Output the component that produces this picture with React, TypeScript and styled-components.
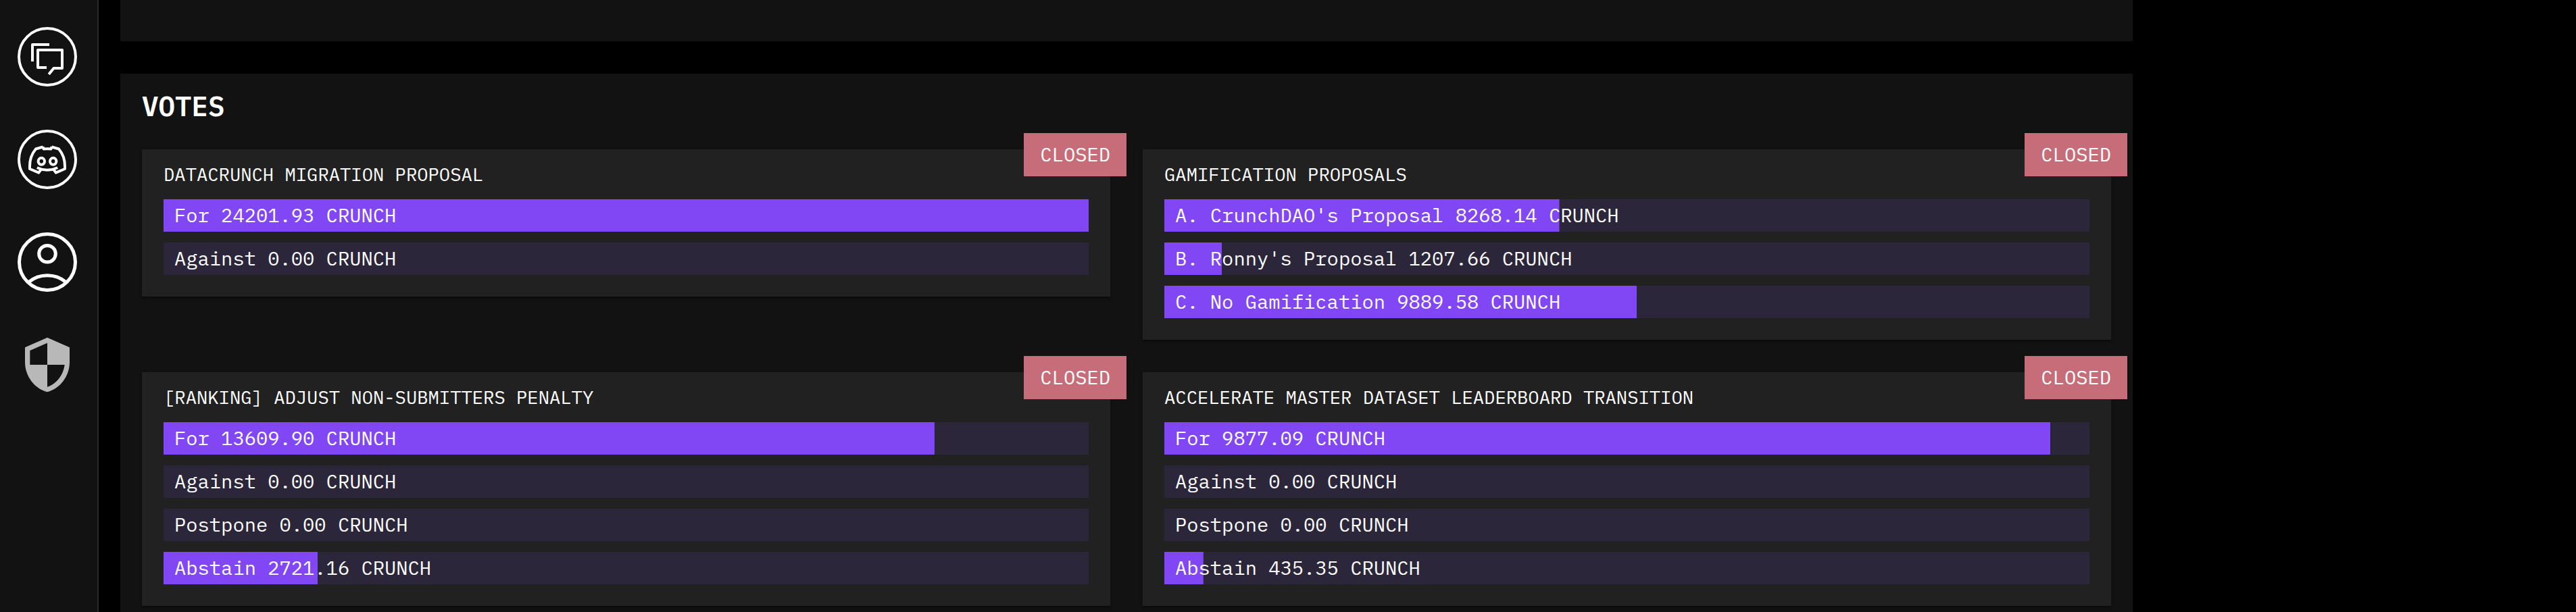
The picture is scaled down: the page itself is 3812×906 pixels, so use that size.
import React from 'react';
import styled, { createGlobalStyle } from 'styled-components';

const GlobalStyle = createGlobalStyle`
  *, *::before, *::after { box-sizing: border-box; }
  body {
    margin: 0;
    background: #000;
    color: #fff;
    font-family: 'IBM Plex Mono', 'Liberation Mono', monospace;
    overflow: hidden;
  }
`;

const Page = styled.div`
  display: flex;
  height: 906px;
  overflow: hidden;
  background: #000;
`;

const Sidebar = styled.nav`
  flex: none;
  display: flex;
  flex-direction: column;
  align-items: flex-start;
  gap: 64px;
  width: 146px;
  padding: 40px 0 0 26px;
  background: #121212;
  border-right: 2px solid #2a2a2a;
`;

const NavIcon = styled.svg<{ $stroke?: number }>`
  display: block;
  flex: none;
  width: 88px;
  height: 88px;
  fill: none;
  stroke: #fff;
  stroke-width: ${({ $stroke = 4 }) => $stroke};
  stroke-linejoin: round;
`;

const ShieldIcon = styled(NavIcon)`
  fill: #b8b8b8;
  stroke: none;
`;

const Main = styled.main`
  display: flex;
  flex-direction: column;
  gap: 48px;
  width: 3010px;
  padding-left: 32px;
`;

const TopPanel = styled.section`
  flex: none;
  height: 61px;
  background: #121212;
`;

const VotesPanel = styled.section`
  flex: none;
  padding: 32px;
  background: #121212;
`;

const PanelTitle = styled.h2`
  margin: 0 0 47.7px;
  font-size: 40.8px;
  font-weight: 600;
  line-height: 32px;
`;

const CardGrid = styled.div`
  display: grid;
  grid-template-columns: 1fr 1fr;
  align-items: start;
  gap: 48px;
`;

const Card = styled.article`
  position: relative;
  padding: 16px 32px 32px;
  background: #212121;
  box-shadow:
    0 4px 2px -2px rgba(0, 0, 0, 0.2),
    0 2px 2px rgba(0, 0, 0, 0.14),
    0 2px 6px rgba(0, 0, 0, 0.12);
`;

const CardTitle = styled.h3`
  margin: 0 0 16.2px;
  font-size: 27.2px;
  font-weight: 400;
  line-height: 42.2px;
  text-transform: uppercase;
`;

const Badge = styled.span`
  position: absolute;
  top: -24px;
  right: -24px;
  height: 64px;
  padding: 0 24px;
  background: #c76d79;
  font-size: 28.8px;
  line-height: 63px;
`;

const Choices = styled.div`
  display: flex;
  flex-direction: column;
  gap: 16px;
`;

const Bar = styled.div`
  height: 48px;
  padding: 0 16px;
  background: linear-gradient(#8247f5, #8247f5) no-repeat 0 0 / var(--share) 100% #2c263a;
  font-size: 28.8px;
  line-height: 46px;
  white-space: nowrap;
`;

interface Choice {
  label: string;
  amount: number;
}

interface Vote {
  title: string;
  choices: Choice[];
}

const votes: Vote[] = [
  {
    title: 'Datacrunch migration proposal',
    choices: [
      { label: 'For', amount: 24201.93 },
      { label: 'Against', amount: 0 },
    ],
  },
  {
    title: 'Gamification proposals',
    choices: [
      { label: "A. CrunchDAO's Proposal", amount: 8268.14 },
      { label: "B. Ronny's Proposal", amount: 1207.66 },
      { label: 'C. No Gamification', amount: 9889.58 },
    ],
  },
  {
    title: '[Ranking] Adjust non-submitters penalty',
    choices: [
      { label: 'For', amount: 13609.9 },
      { label: 'Against', amount: 0 },
      { label: 'Postpone', amount: 0 },
      { label: 'Abstain', amount: 2721.16 },
    ],
  },
  {
    title: 'Accelerate master dataset leaderboard transition',
    choices: [
      { label: 'For', amount: 9877.09 },
      { label: 'Against', amount: 0 },
      { label: 'Postpone', amount: 0 },
      { label: 'Abstain', amount: 435.35 },
    ],
  },
];

function VoteCard({ vote }: { vote: Vote }) {
  const total = vote.choices.reduce((sum, c) => sum + c.amount, 0);
  return (
    <Card>
      <Badge>CLOSED</Badge>
      <CardTitle>{vote.title}</CardTitle>
      <Choices>
        {vote.choices.map((c) => (
          <Bar
            key={c.label}
            style={{ '--share': `${(c.amount / total) * 100}%` } as React.CSSProperties}
          >
            {`${c.label} ${c.amount.toFixed(2)} CRUNCH`}
          </Bar>
        ))}
      </Choices>
    </Card>
  );
}

export default function App() {
  return (
    <Page>
      <GlobalStyle />
      <Sidebar>
        <NavIcon viewBox="0 0 88 88">
          <circle cx="44" cy="44" r="42" />
          <path d="M47 26H22V51" />
          <path d="M43 60H30V34H66V61H53.5L46.2 70" />
        </NavIcon>
        <NavIcon viewBox="0 0 88 88">
          <circle cx="44" cy="44" r="42" />
          <path d="M37.5 25.5L27 28.5C21.5 35 18 45 18 54V58L31.3 63.6L34.6 59" />
          <path d="M50.5 25.5L61 28.5C66.5 35 70 45 70 54V58L56.7 63.6L53.4 59" />
          <path d="M37.3 25.3L38.6 28.5Q44 27.9 49.4 28.5L50.7 25.3" />
          <path d="M28.8 56.3Q44 63.2 59.2 56.3" />
          <ellipse cx="35.3" cy="46.8" rx="4.7" ry="5" />
          <ellipse cx="52.7" cy="46.8" rx="4.7" ry="5" />
        </NavIcon>
        <NavIcon viewBox="0 0 88 88" $stroke={5}>
          <circle cx="44" cy="44" r="41.5" />
          <circle cx="44" cy="31.8" r="12.3" />
          <path d="M16.4 73.6A43.6 43.6 0 0 1 71.6 73.6" />
        </NavIcon>
        <ShieldIcon viewBox="0 0 24 24">
          <path d="M12 1 3 5v6c0 5.55 3.84 10.74 9 12 5.16-1.26 9-6.45 9-12V5l-9-4zm0 10.99h7c-.53 4.12-3.28 7.79-7 8.94V12H5V6.3l7-3.11v8.8z" />
        </ShieldIcon>
      </Sidebar>
      <Main>
        <TopPanel />
        <VotesPanel>
          <PanelTitle>VOTES</PanelTitle>
          <CardGrid>
            {votes.map((v) => (
              <VoteCard key={v.title} vote={v} />
            ))}
          </CardGrid>
        </VotesPanel>
      </Main>
    </Page>
  );
}
